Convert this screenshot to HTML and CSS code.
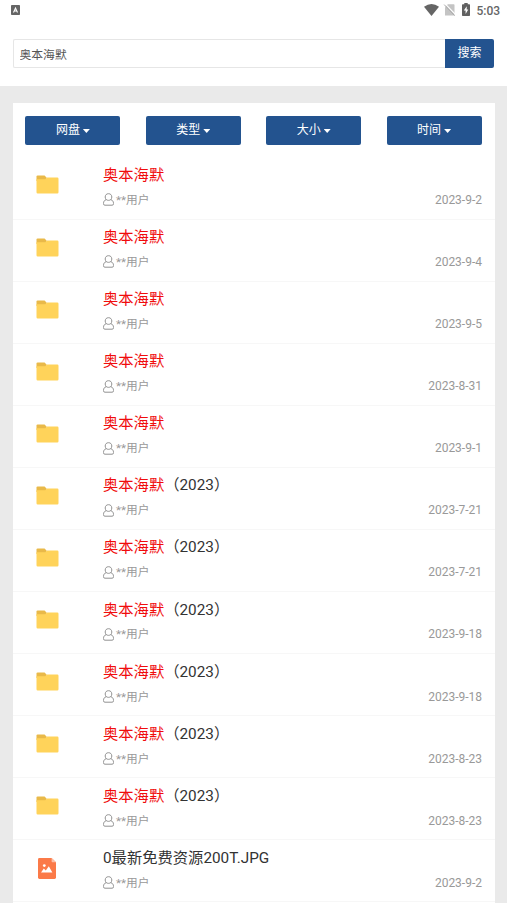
FILE: index.html
```
<!DOCTYPE html>
<html lang="zh-CN">
<head>
<meta charset="utf-8">
<title>奥本海默</title>
<link rel="stylesheet" href="styles.css">
</head>
<body>
<svg class="symbols" aria-hidden="true">
  <symbol id="folder" viewBox="0 0 23 19"><path d="M.5 5V1.6Q.5.5 1.6.5H8.6L10.5 2.5V6H.5Z" fill="#e9b949"/><path d="M.5 4.2H9.2L11.2 2.5H21.3Q22.5 2.5 22.5 3.7V17.2Q22.5 18.4 21.3 18.4H1.7Q.5 18.4.5 17.2Z" fill="#ffd35a"/></symbol>
  <symbol id="image" viewBox="0 0 18 21"><path d="M1.4 0H13.6L18 4.2V19.6Q18 21 16.6 21H1.4Q0 21 0 19.6V1.4Q0 0 1.4 0Z" fill="#fb7a48"/><path d="M13.6 0 18 4.2H14.4Q13.6 4.2 13.6 3.4Z" fill="#fdc0a8"/><path d="M3 14.6 5.8 10.6 7.8 12.4 10.8 8.2 14.4 14.6Z" fill="#fff"/><circle cx="6.3" cy="7.6" r="1.4" fill="#fff"/></symbol>
  <symbol id="user" viewBox="0 0 11 13"><path d="M3.2 6.6C2.5 5.9 2.2 5 2.2 4C2.2 2 3.5.7 5.5.7S8.8 2 8.8 4C8.8 5 8.5 5.9 7.8 6.6M3.2 6.6C1.4 7.2.5 8.6.5 10.4V10.8Q.5 12.2 1.9 12.2H9.1Q10.5 12.2 10.5 10.8V10.4C10.5 8.6 9.6 7.2 7.8 6.6C6.5 7.6 4.5 7.6 3.2 6.6" fill="none" stroke="#8c8c8c" stroke-width=".95"/></symbol>
</svg>
<div class="status">
  <svg class="app" viewBox="0 0 9 10"><rect width="9" height="10" rx=".8" fill="#656565"/><path d="M2.5 7.4 4.5 3 6.5 7.4M3.2 6H5.8" fill="none" stroke="#fff" stroke-width="1.1"/></svg>
  <div class="system">
    <svg class="wifi" viewBox="0 0 15 12"><path d="M0 2.7Q7.5-2.5 15 2.7L7.5 12Z" fill="#656565"/></svg>
    <svg class="sim" viewBox="0 0 11 12"><path d="M3.8.3H9.7Q10.5.3 10.5 1.1V11.5H1V3.3Z" fill="#c4c4c4"/><path d="M1-.4 11.4 10.4" stroke="#fff" stroke-width="1.1"/><path d="M.2.6 10.6 11.6" stroke="#aaa" stroke-width="1"/></svg>
    <svg class="battery" viewBox="0 0 8 13"><path d="M2.3 0H5.7V1.3H7.3Q8 1.3 8 2V12.2Q8 13 7.3 13H.7Q0 13 0 12.2V2Q0 1.3.7 1.3H2.3Z" fill="#616161"/><path d="M4.7 3.2 1.8 7.6H3.6V11L6.3 6.6H4.7Z" fill="#fff"/></svg>
    <span>5:03</span>
  </div>
</div>
<form class="search"><input class="field" type="text" value="奥本海默"><button class="submit" type="button">搜索</button></form>
<main class="panel">
  <nav class="filters">
    <button>网盘<i class="caret"></i></button><button>类型<i class="caret"></i></button><button>大小<i class="caret"></i></button><button>时间<i class="caret"></i></button>
  </nav>
  <ul class="results" id="results"></ul>
</main>
<script src="script.js"></script>
</body>
</html>
```
FILE: styles.css
```
* { box-sizing: border-box; }
html { background: #eaeaea; }
body { margin: 0; height: 903px; overflow: hidden; color: #333; background: #eaeaea; font-family: Roboto, "Noto Sans CJK SC", sans-serif; }
.symbols { display: none; }
svg { display: block; flex: none; overflow: visible; }
.status { height: 39px; background: #fff; display: flex; justify-content: space-between; align-items: flex-start; padding: 0 7.5px 0 11px; }
.app { width: 9px; height: 10px; margin-top: 5px; }
.system { display: flex; align-items: flex-start; height: 20px; padding-top: 4px; color: #656565; font-size: 12px; font-weight: 500; line-height: 14px; }
.wifi { width: 15px; height: 12px; margin-right: 5px; }
.sim { width: 11px; height: 12px; margin-right: 7px; }
.battery { width: 8px; height: 13px; margin: -1px 6.5px 0 0; }
.system span { width: 23px; white-space: nowrap; }
.search { display: flex; height: 47px; margin: 0; padding: 0 13px 18px; background: #fff; }
.field { flex: 1; min-width: 0; height: 29px; margin: 0; padding: 0 5.5px; border: 1px solid #e6e6e6; border-right: 0; border-radius: 2px 0 0 2px; background: #fff; color: #555; font: 11.8px/27px Roboto, "Noto Sans CJK SC", sans-serif; }
button { border: 0; margin: 0; padding: 0; background: #23538f; color: #fff; font: 12px/27px Roboto, "Noto Sans CJK SC", sans-serif; height: 29px; border-radius: 2px; }
.submit { width: 49px; border-radius: 0 2px 2px 0; }
.panel { margin: 17px 12px 0 13px; background: #fff; height: 800px; overflow: hidden; }
.filters { display: grid; grid-template-columns: repeat(4, 95px); justify-content: space-between; padding: 13px 13.4px 0 12.4px; height: 54.9px; }
.filters button { display: flex; align-items: center; justify-content: center; }
.caret { width: 7px; height: 4px; margin: 1px 0 0 3px; background: #fff; clip-path: polygon(0 0, 100% 0, 50% 100%); }
.results { list-style: none; margin: 0; padding: 0; }
.row { display: flex; height: 62.05px; border-bottom: 1px solid #f7f7f7; padding-right: 13px; }
.thumb { width: 90px; padding: 17.6px 0 0 23px; }
.folder { width: 23px; height: 19px; }
.image { width: 18px; height: 21px; margin: -.2px 0 0 2px; }
.detail { flex: 1; }
.title { margin: 0; padding-top: 5.3px; font-size: 15.3px; font-weight: 400; line-height: 25px; height: 30px; white-space: nowrap; }
.title em { font-style: normal; color: #f00c0c; }
.meta { display: flex; align-items: center; height: 24px; color: #999; font-size: 11.7px; line-height: 20px; }
.user { width: 11px; height: 13px; margin-right: 2px; }
.meta span, .meta time { padding-top: .5px; }
.meta time { margin-left: auto; font-size: 12px; }
```
FILE: script.js
```
const key = '<em>奥本海默</em>';
const rows = [
  [key, '2023-9-2'], [key, '2023-9-4'], [key, '2023-9-5'], [key, '2023-8-31'], [key, '2023-9-1'],
  [key + '（2023）', '2023-7-21'], [key + '（2023）', '2023-7-21'],
  [key + '（2023）', '2023-9-18'], [key + '（2023）', '2023-9-18'],
  [key + '（2023）', '2023-8-23'], [key + '（2023）', '2023-8-23'],
  ['0最新免费资源200T.JPG', '2023-9-2', 'image']
];
document.getElementById('results').innerHTML = rows.map(([title, date, icon = 'folder']) =>
  `<li class="row"><div class="thumb"><svg class="${icon}"><use href="#${icon}"/></svg></div><div class="detail"><h3 class="title">${title}</h3><div class="meta"><svg class="user"><use href="#user"/></svg><span>**用户</span><time>${date}</time></div></div></li>`
).join('');
```
